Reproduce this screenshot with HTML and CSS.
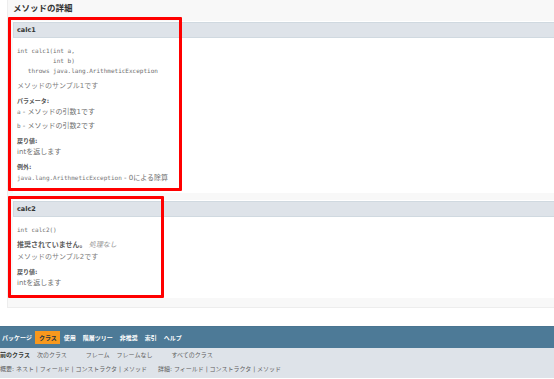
FILE: index.html
```html
<!DOCTYPE html>
<html lang="ja">
<head>
    <meta charset="UTF-8">
    <title>メソッドの詳細</title>
    <link rel="stylesheet" href="styles.css">
</head>
<body>
<div class="details">
    <h3 class="details__title">メソッドの詳細</h3>
    <ul class="member-list">
        <li class="member">
            <h4 class="member__name">calc1</h4>
            <pre class="member__sig">int calc1(int a,
          int b)
   throws java.lang.ArithmeticException</pre>
            <div class="member__block">メソッドのサンプル1です</div>
            <dl class="member__notes">
                <dt>パラメータ:</dt>
                <dd><code>a</code> - メソッドの引数1です</dd>
                <dd><code>b</code> - メソッドの引数2です</dd>
                <dt>戻り値:</dt>
                <dd>intを返します</dd>
                <dt>例外:</dt>
                <dd><code>java.lang.ArithmeticException</code> - 0による除算</dd>
            </dl>
        </li>
        <li class="member">
            <h4 class="member__name">calc2</h4>
            <pre class="member__sig">int calc2()</pre>
            <div class="member__block member__block--deprecated">
                <span class="deprecated-label">推奨されていません。</span>&nbsp;<i class="deprecated-comment">処理なし</i>
            </div>
            <div class="member__block member__block--tight">メソッドのサンプル2です</div>
            <dl class="member__notes">
                <dt>戻り値:</dt>
                <dd>intを返します</dd>
            </dl>
        </li>
    </ul>
</div>

<nav class="top-nav">
    <ul class="top-nav__list">
        <li>パッケージ</li>
        <li class="top-nav__current">クラス</li>
        <li>使用</li>
        <li>階層ツリー</li>
        <li>非推奨</li>
        <li>索引</li>
        <li>ヘルプ</li>
    </ul>
</nav>
<div class="sub-nav">
    <div class="sub-nav__row">
        <ul class="sub-nav__group">
            <li class="sub-nav__strong">前のクラス</li>
            <li>次のクラス</li>
        </ul>
        <ul class="sub-nav__group">
            <li>フレーム</li>
            <li>フレームなし</li>
        </ul>
        <ul class="sub-nav__group">
            <li>すべてのクラス</li>
        </ul>
    </div>
    <div class="sub-nav__row sub-nav__row--second">
        <ul class="sub-nav__group">
            <li>概要:&nbsp;ネスト&nbsp;|&nbsp;フィールド&nbsp;|&nbsp;コンストラクタ&nbsp;|&nbsp;メソッド</li>
        </ul>
        <ul class="sub-nav__group">
            <li>詳細:&nbsp;フィールド&nbsp;|&nbsp;コンストラクタ&nbsp;|&nbsp;メソッド</li>
        </ul>
    </div>
</div>

<!-- 注釈の赤枠 -->
<div class="mark mark--calc1"></div>
<div class="mark mark--calc2"></div>
</body>
</html>
```

FILE: styles.css
```css
* {
    margin: 0;
    padding: 0;
    box-sizing: border-box;
}

body {
    position: relative;
    width: 554px;
    height: 379px;
    overflow: hidden;
    background: #ffffff;
    color: #444444;
    font-family: "DejaVu Sans", "Noto Sans CJK JP", sans-serif;
}

ul {
    list-style: none;
}

.details {
    margin-left: 7px;
    margin-right: -20px;
    padding: 0 0 2px 5px;
    background: #f8f8f8;
    border: 1px solid #ededed;
    border-top: none;
}

.details__title {
    height: 16px;
    margin-bottom: 5px;
    font-size: 8.5px;
    line-height: 16px;
    font-weight: bold;
    color: #333333;
}

.member {
    margin-bottom: 7px;
    padding: 1px 0 10px 4px;
    background: #ffffff;
}

.member__name {
    height: 16px;
    margin-left: -4px;
    padding: 0 3px;
    background: #dee3e9;
    border: 1px solid #d0d9e0;
    font-size: 6.5px;
    line-height: 14px;
    font-weight: bold;
    color: #333333;
}

.member__sig {
    margin-top: 8px;
    font-family: "DejaVu Sans Mono", monospace;
    font-size: 6px;
    line-height: 10px;
    color: #707070;
}

.member__block {
    margin-top: 5px;
    font-size: 7px;
    line-height: 10px;
    color: #808080;
}

.member__block--tight {
    margin-top: 2px;
}

.deprecated-label {
    font-weight: bold;
    color: #606060;
}

.deprecated-comment {
    color: #8c8c8c;
}

.member__notes {
    margin-top: 2px;
}

.member__notes dt {
    margin-top: 5px;
    font-size: 6px;
    line-height: 10px;
    font-weight: bold;
    color: #555555;
}

.member__notes dd {
    margin-top: 1px;
    font-size: 7px;
    line-height: 10px;
    color: #707070;
}

.member__notes dd + dd {
    margin-top: 4px;
}

.member__notes code {
    font-family: "DejaVu Sans Mono", monospace;
    font-size: 6px;
    color: #777777;
}

.top-nav {
    height: 22px;
    margin-top: 18px;
    display: flex;
    align-items: center;
    background: #4d7a97;
    border-top: 1px solid #4a7490;
}

.top-nav__list {
    display: flex;
    margin-left: -1.5px;
}

.top-nav__list li {
    padding: 0 3.5px;
    height: 13px;
    font-size: 6px;
    line-height: 13px;
    font-weight: bold;
    color: #ffffff;
}

.top-nav__list .top-nav__current {
    background: #f8981d;
    color: #253441;
}

.sub-nav {
    height: 30px;
    padding-top: 2px;
    background: #dee3e9;
}

.sub-nav__row {
    display: flex;
    gap: 19px;
    font-size: 6px;
    line-height: 10px;
    color: #606060;
}

.sub-nav__row--second {
    margin-top: 4px;
    gap: 11px;
}

.sub-nav__group {
    display: flex;
    gap: 7px;
}

.sub-nav__strong {
    font-weight: bold;
    color: #353833;
}

.mark {
    position: absolute;
    left: 8px;
    border: 3px solid #ff0000;
    border-radius: 1px;
}

.mark--calc1 {
    top: 17px;
    width: 174px;
    height: 174px;
}

.mark--calc2 {
    top: 196px;
    width: 156px;
    height: 102px;
}
```
